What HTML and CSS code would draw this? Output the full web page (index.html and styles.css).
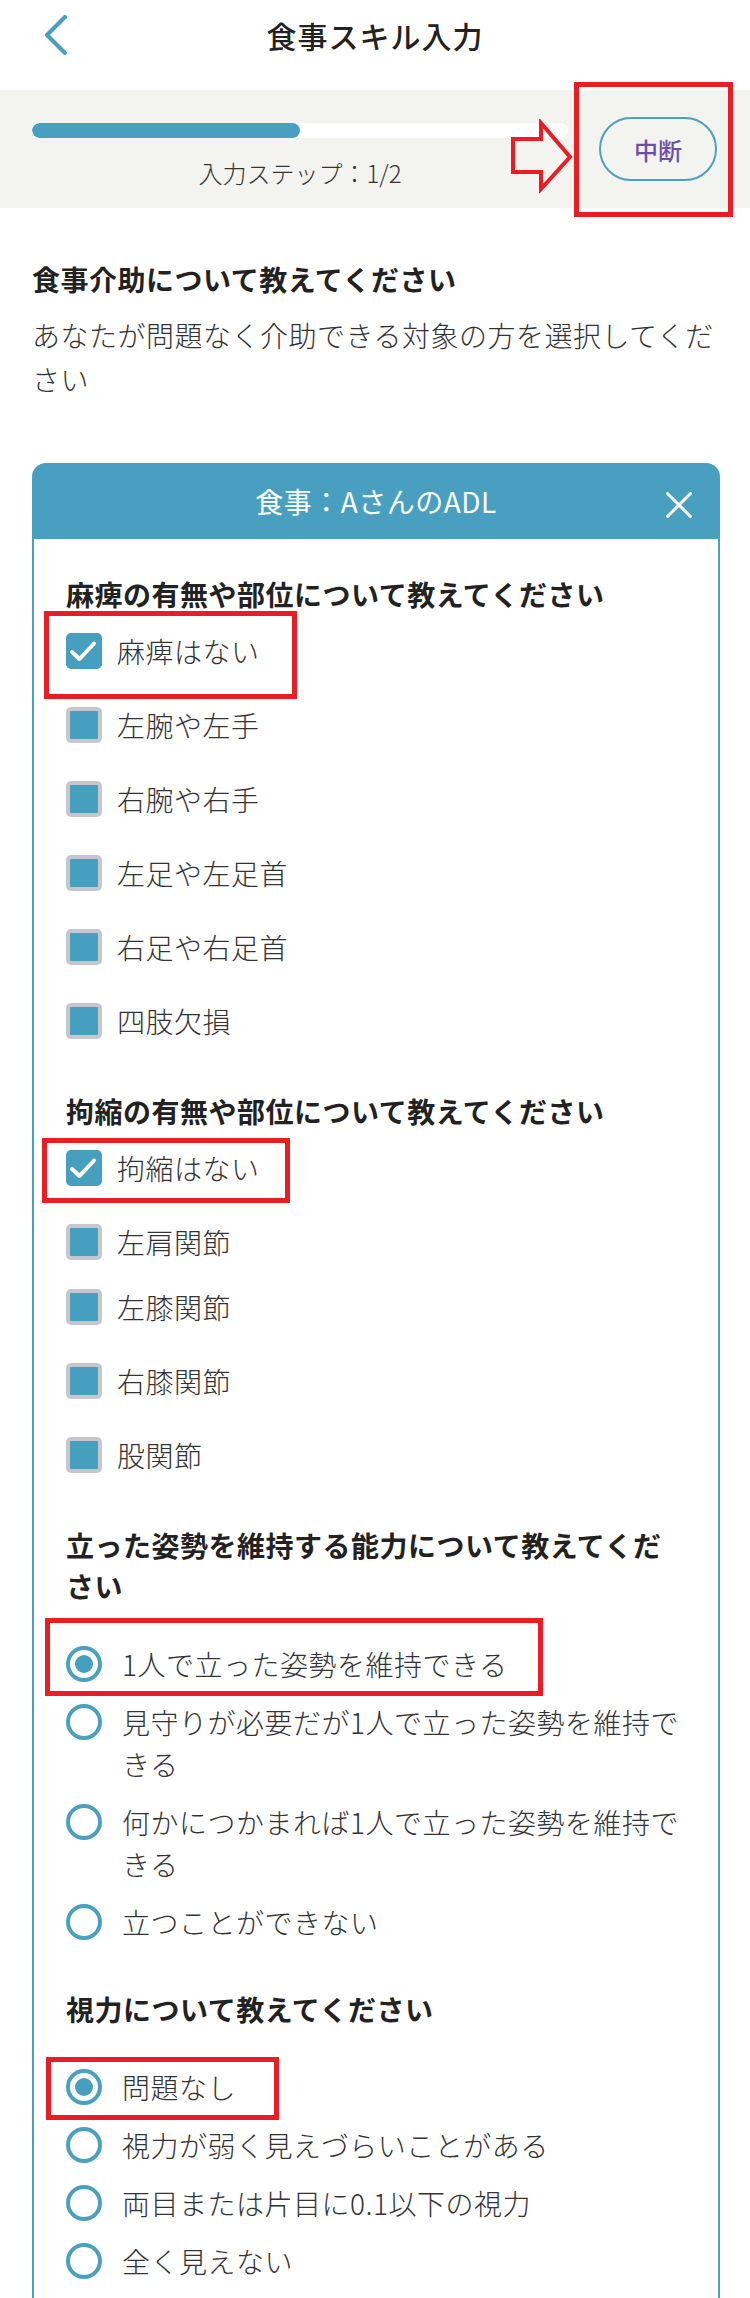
FILE: index.html
```html
<!DOCTYPE html>
<html lang="ja">
<head>
<meta charset="utf-8">
<title>食事スキル入力</title>
<link rel="stylesheet" href="styles.css">
</head>
<body>
<div class="page">
  <header class="topbar">
    <div class="topbar-left">
      <svg class="back" width="24" height="40" viewBox="0 0 24 40"><polyline points="21,2 3,20 21,38"/></svg>
    </div>
    <h1 class="title">食事スキル入力</h1>
    <div class="topbar-right"></div>
  </header>

  <section class="progress">
    <div class="progress-main">
      <div class="bar"><div class="bar-fill" style="width:50%"></div></div>
      <p class="step">入力ステップ：1/2</p>
    </div>
    <button class="pause">中断</button>
    <svg class="note-arrow" width="65" height="74" viewBox="0 0 65 74"><polygon points="4,20 32,20 32,4 61,38 32,70 32,53 4,53"/></svg>
    <span class="note-box note-pause"></span>
  </section>

  <main class="content">
    <h2 class="intro-title">食事介助について教えてください</h2>
    <p class="intro-text">あなたが問題なく介助できる対象の方を選択してください</p>

    <div class="card">
      <div class="card-head">
        <span></span>
        <h3 class="card-title">食事：AさんのADL</h3>
        <svg class="close" width="26" height="26" viewBox="0 0 26 26"><line x1="1.5" y1="1.5" x2="24.5" y2="24.5"/><line x1="24.5" y1="1.5" x2="1.5" y2="24.5"/></svg>
      </div>
      <div class="card-body">

        <div class="q">
          <h4 class="q-title">麻痺の有無や部位について教えてください</h4>
          <ul class="checks">
            <li class="check-row">
              <span class="box box-on"><svg width="36" height="36" viewBox="0 0 36 36"><polyline points="6,19 13.5,26 28,10.5"/></svg></span>
              <span class="label">麻痺はない</span>
              <span class="note-box note-1"></span>
            </li>
            <li class="check-row"><span class="box box-off"></span><span class="label">左腕や左手</span></li>
            <li class="check-row"><span class="box box-off"></span><span class="label">右腕や右手</span></li>
            <li class="check-row"><span class="box box-off"></span><span class="label">左足や左足首</span></li>
            <li class="check-row"><span class="box box-off"></span><span class="label">右足や右足首</span></li>
            <li class="check-row"><span class="box box-off"></span><span class="label">四肢欠損</span></li>
          </ul>
        </div>

        <div class="q">
          <h4 class="q-title">拘縮の有無や部位について教えてください</h4>
          <ul class="checks">
            <li class="check-row">
              <span class="box box-on"><svg width="36" height="36" viewBox="0 0 36 36"><polyline points="6,19 13.5,26 28,10.5"/></svg></span>
              <span class="label">拘縮はない</span>
              <span class="note-box note-2"></span>
            </li>
            <li class="check-row"><span class="box box-off"></span><span class="label">左肩関節</span></li>
            <li class="check-row tight"><span class="box box-off"></span><span class="label">左膝関節</span></li>
            <li class="check-row"><span class="box box-off"></span><span class="label">右膝関節</span></li>
            <li class="check-row"><span class="box box-off"></span><span class="label">股関節</span></li>
          </ul>
        </div>

        <div class="q">
          <h4 class="q-title">立った姿勢を維持する能力について教えてください</h4>
          <ul class="radios">
            <li class="radio-row">
              <span class="radio radio-on"></span>
              <span class="label">1人で立った姿勢を維持できる</span>
              <span class="note-box note-3"></span>
            </li>
            <li class="radio-row"><span class="radio"></span><span class="label">見守りが必要だが1人で立った姿勢を維持できる</span></li>
            <li class="radio-row"><span class="radio"></span><span class="label">何かにつかまれば1人で立った姿勢を維持できる</span></li>
            <li class="radio-row"><span class="radio"></span><span class="label">立つことができない</span></li>
          </ul>
        </div>

        <div class="q q-vision">
          <h4 class="q-title">視力について教えてください</h4>
          <ul class="radios">
            <li class="radio-row">
              <span class="radio radio-on"></span>
              <span class="label">問題なし</span>
              <span class="note-box note-4"></span>
            </li>
            <li class="radio-row"><span class="radio"></span><span class="label">視力が弱く見えづらいことがある</span></li>
            <li class="radio-row"><span class="radio"></span><span class="label">両目または片目に0.1以下の視力</span></li>
            <li class="radio-row"><span class="radio"></span><span class="label">全く見えない</span></li>
          </ul>
        </div>

      </div>
    </div>
  </main>
</div>
</body>
</html>
```

FILE: styles.css
```css
* { box-sizing: border-box; }

html, body {
  margin: 0;
  padding: 0;
  background: #ffffff;
}

body {
  font-family: "Noto Sans CJK JP", "Noto Sans", sans-serif;
  font-weight: 300;
  color: #333333;
  width: 750px;
  height: 2298px;
  overflow: hidden;
}

.page {
  width: 750px;
}

/* top bar */
.topbar {
  height: 90px;
  display: grid;
  grid-template-columns: 1fr auto 1fr;
  align-items: start;
  padding-top: 15px;
}

.topbar-left {
  padding-left: 44px;
}

.back {
  display: block;
}

.back polyline {
  fill: none;
  stroke: #489fc0;
  stroke-width: 4;
  stroke-linecap: round;
  stroke-linejoin: round;
}

.title {
  margin: 0;
  font-size: 30px;
  letter-spacing: 1px;
  line-height: 40px;
  font-weight: 500;
  color: #222222;
}

/* progress band */
.progress {
  position: relative;
  height: 118px;
  background: #f3f3f0;
  display: flex;
  align-items: flex-start;
  padding: 27px 33px 0 32px;
}

.progress-main {
  flex: 1;
  padding-top: 6px;
}

.bar {
  height: 15px;
  border-radius: 8px;
  background: #ffffff;
  overflow: hidden;
}

.bar-fill {
  height: 100%;
  border-radius: 8px;
  background: #489fc0;
}

.step {
  margin: 18px 0 0;
  font-size: 24px;
  line-height: 34px;
  text-align: center;
  color: #333333;
}

.pause {
  margin-left: 31px;
  width: 118px;
  height: 64px;
  border: 2px solid #4aa0c0;
  border-radius: 32px;
  background: transparent;
  color: #6a4fa8;
  font-family: "Noto Sans CJK JP", sans-serif;
  font-size: 24px;
  font-weight: 500;
  padding: 0;
}

/* red annotations */
.note-box {
  position: absolute;
  border: 5px solid #ea1d25;
  pointer-events: none;
}

.note-pause {
  left: 574px;
  top: -8px;
  width: 159px;
  height: 135px;
}

.note-arrow {
  position: absolute;
  left: 509px;
  top: 29px;
}

.note-arrow polygon {
  fill: none;
  stroke: #ea1d25;
  stroke-width: 4;
  stroke-linejoin: miter;
}

/* main content */
.content {
  padding: 51px 30px 0 32px;
}

.intro-title {
  margin: 0;
  font-size: 28px;
  line-height: 40px;
  letter-spacing: 0.5px;
  font-weight: 700;
  color: #222222;
}

.intro-text {
  margin: 14px 0 0;
  font-size: 28px;
  line-height: 44px;
  letter-spacing: 0.5px;
  color: #333333;
}

/* card */
.card {
  margin-top: 62px;
  width: 688px;
}

.card-head {
  height: 76px;
  background: #489fc0;
  border-radius: 14px 14px 0 0;
  display: grid;
  grid-template-columns: 1fr auto 1fr;
  align-items: center;
}

.card-title {
  margin: 0;
  font-size: 28px;
  line-height: 76px;
  font-weight: 400;
  color: #ffffff;
  letter-spacing: 0.5px;
}

.close {
  justify-self: end;
  margin-right: 28px;
  margin-top: 8px;
}

.close line {
  stroke: #ffffff;
  stroke-width: 3;
  stroke-linecap: round;
}

.card-body {
  border-left: 2px solid #4aa0c0;
  border-right: 2px solid #4aa0c0;
  padding: 35px 31px 60px 32px;
}

.q + .q {
  margin-top: 49px;
}

.q.q-vision {
  margin-top: 46px;
}

.q-title {
  margin: 0;
  font-size: 28px;
  line-height: 41px;
  letter-spacing: 0.5px;
  font-weight: 700;
  color: #222222;
}

ul {
  list-style: none;
  margin: 0;
  padding: 0;
}

.checks {
  margin-top: 15px;
  display: flex;
  flex-direction: column;
  gap: 32px;
}

.check-row {
  position: relative;
  display: flex;
  align-items: center;
  gap: 15px;
  min-height: 42px;
}

.check-row.tight {
  margin-top: -9px;
}

.label {
  font-size: 28px;
  line-height: 42px;
  letter-spacing: 0.5px;
  color: #333333;
}

.box {
  flex: none;
  width: 36px;
  height: 36px;
  border-radius: 5px;
  background: #479fc0;
}

.box svg {
  display: block;
}

.box polyline {
  fill: none;
  stroke: #ffffff;
  stroke-width: 4;
  stroke-linecap: round;
  stroke-linejoin: round;
}

.box-off {
  border: 4px solid #c6c7cd;
}

.radios {
  margin-top: 36px;
  display: flex;
  flex-direction: column;
  gap: 16px;
}

.radio-row {
  position: relative;
  display: flex;
  align-items: flex-start;
  gap: 20px;
}

.radio {
  flex: none;
  width: 36px;
  height: 36px;
  margin-top: 3px;
  border-radius: 50%;
  border: 4px solid #4aa0c0;
  display: flex;
  align-items: center;
  justify-content: center;
}

.radio-on::after {
  content: "";
  width: 18px;
  height: 18px;
  border-radius: 50%;
  background: #479fc0;
}

.note-1 { left: -22px; top: -19px; width: 253px; height: 88px; }
.note-2 { left: -24px; top: -9px; width: 248px; height: 65px; }
.note-3 { left: -21px; top: -25px; width: 498px; height: 78px; }
.note-4 { left: -20px; top: -9px; width: 233px; height: 63px; }
```
